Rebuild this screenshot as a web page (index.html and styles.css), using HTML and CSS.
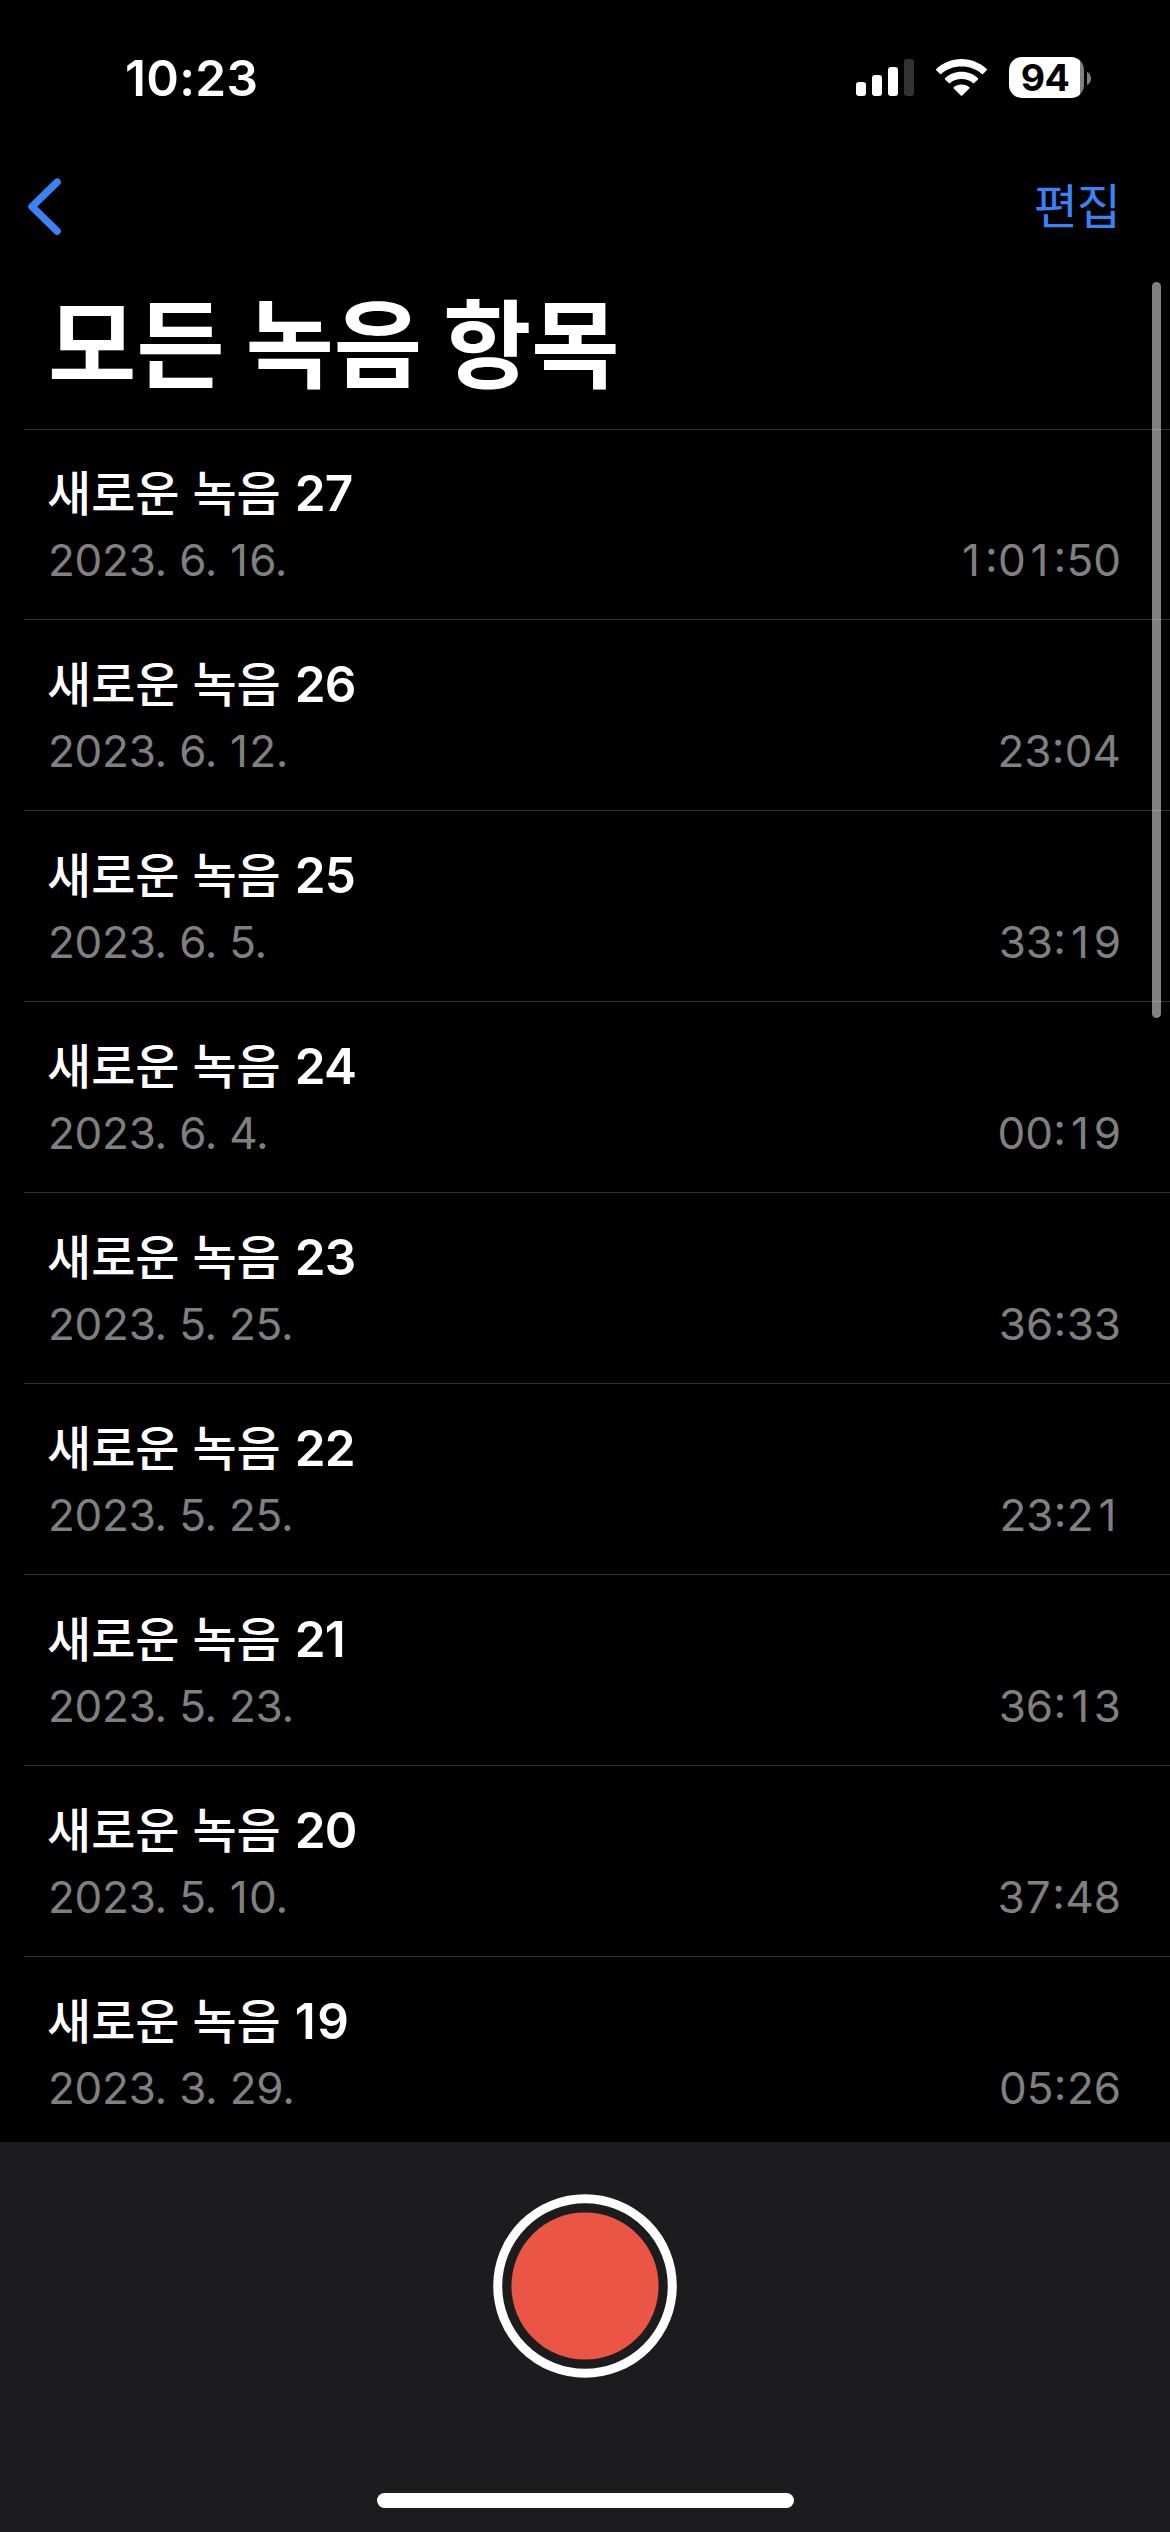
FILE: index.html
```html
<!DOCTYPE html>
<html lang="ko">
<head>
<meta charset="utf-8">
<title>모든 녹음 항목</title>
<link rel="stylesheet" href="styles.css">
</head>
<body>
<div class="screen">
  <header class="status">
    <span class="clock">10:23</span>
    <div class="indicators">
      <svg class="signal" width="58" height="37" viewBox="0 0 58 37" fill="#fff">
        <rect x="0" y="23" width="10" height="14" rx="3"/>
        <rect x="16" y="16" width="10" height="21" rx="3"/>
        <rect x="32" y="8" width="10" height="29" rx="3"/>
        <rect x="48" y="0" width="10" height="37" rx="3" fill="#333"/>
      </svg>
      <svg class="wifi" width="51" height="37" viewBox="0 0 51 37" fill="#fff">
        <path d="M25.5 0C35.300 0 44.200 3.800 50.700 10.100Q51.200 10.700 50.700 11.300L47 15Q46.400 15.500 45.800 15C40.500 10 33.400 7.400 25.500 7.400S10.500 10 5.200 15Q4.600 15.500 4 15L.3 11.300Q-.2 10.700 .3 10.100C6.800 3.800 15.700 0 25.500 0Z"/>
        <path d="M25.500 12.800C31.900 12.800 37.700 15.200 42 19.200Q42.500 19.800 42 20.400L38.200 24.100Q37.600 24.600 37 24.100C33.900 21.400 29.900 20 25.500 20S17.100 21.400 14 24.100Q13.400 24.600 12.800 24.100L9 20.400Q8.500 19.800 9 19.200C13.300 15.200 19.100 12.800 25.500 12.800Z"/>
        <path d="M25.500 25.500C28.500 25.500 31.200 26.500 33.300 28.200Q33.900 28.800 33.300 29.400L26.200 36.500Q25.500 37.100 24.800 36.500L17.700 29.400Q17.100 28.800 17.700 28.200C19.800 26.500 22.500 25.500 25.500 25.500Z"/>
      </svg>
      <div class="battery">
        <span class="level">94</span>
        <svg class="battery-cap" width="4" height="13" viewBox="0 0 4 13"><path d="M0 0C2.500 1 4 3.600 4 6.500S2.500 12 0 13Z" fill="#808080"/></svg>
      </div>
    </div>
  </header>

  <nav class="navbar">
    <svg class="back" width="34" height="58" viewBox="0 0 34 58" fill="none" stroke="#3b82f7" stroke-width="7.400" stroke-linecap="round" stroke-linejoin="round"><path d="M29.100 4.200L4 28.700L29.100 53.200"/></svg>
    <span class="edit">편집</span>
  </nav>

  <h1 class="heading">모든 녹음 항목</h1>

  <ul class="list">
    <li class="row first"><div class="name">새로운 녹음 <span class="num">27</span></div><div class="meta"><span class="date">2023. 6. <i>1</i>6.</span><span class="time"><b>1</b><u>:</u>0<b>1</b><u>:</u>50</span></div></li>
    <li class="row"><div class="name">새로운 녹음 <span class="num">26</span></div><div class="meta"><span class="date">2023. 6. <i>1</i>2.</span><span class="time">23<u>:</u>04</span></div></li>
    <li class="row"><div class="name">새로운 녹음 <span class="num">25</span></div><div class="meta"><span class="date">2023. 6. 5.</span><span class="time">33<u>:</u><b>1</b>9</span></div></li>
    <li class="row"><div class="name">새로운 녹음 <span class="num">24</span></div><div class="meta"><span class="date">2023. 6. 4.</span><span class="time">00<u>:</u><b>1</b>9</span></div></li>
    <li class="row"><div class="name">새로운 녹음 <span class="num">23</span></div><div class="meta"><span class="date">2023. 5. 25.</span><span class="time">36<u>:</u>33</span></div></li>
    <li class="row"><div class="name">새로운 녹음 <span class="num">22</span></div><div class="meta"><span class="date">2023. 5. 25.</span><span class="time">23<u>:</u>2<b>1</b></span></div></li>
    <li class="row"><div class="name">새로운 녹음 <span class="num">21</span></div><div class="meta"><span class="date">2023. 5. 23.</span><span class="time">36<u>:</u><b>1</b>3</span></div></li>
    <li class="row"><div class="name">새로운 녹음 <span class="num">20</span></div><div class="meta"><span class="date">2023. 5. <i>1</i>0.</span><span class="time">3<b>7</b><u>:</u>48</span></div></li>
    <li class="row"><div class="name">새로운 녹음 <span class="num"><i>1</i>9</span></div><div class="meta"><span class="date">2023. 3. 29.</span><span class="time">05<u>:</u>26</span></div></li>
  </ul>

  <footer class="recorder">
    <svg class="record" width="184" height="184" viewBox="0 0 184 184">
      <circle cx="92" cy="92" r="87.300" fill="none" stroke="#fff" stroke-width="9"/>
      <circle cx="92" cy="92" r="73.600" fill="#eb5545"/>
    </svg>
    <div class="home"></div>
  </footer>

  <div class="scrollbar"></div>
</div>
</body>
</html>
```
FILE: styles.css
```css
* {
  box-sizing: border-box;
}

body {
  margin: 0;
  background: #000;
  color: #fff;
  font-family: Inter, "Noto Sans CJK KR", sans-serif;
}

.screen {
  position: relative;
  display: flex;
  flex-direction: column;
  width: 1170px;
  height: 2532px;
  overflow: hidden;
  background: #000;
}

.status {
  display: flex;
  justify-content: space-between;
  height: 141px;
  padding: 48px 79px 0 125px;
}

.clock {
  font-size: 49.5px;
  font-weight: 600;
  line-height: 60px;
  letter-spacing: 0.3px;
}

.indicators {
  display: flex;
  align-items: flex-start;
}

.signal {
  margin: 11px 22px 0 0;
}

.wifi {
  margin: 11px 22px 0 0;
}

.battery {
  display: flex;
  align-items: center;
  gap: 3px;
  margin-top: 9px;
}

.level {
  width: 75px;
  height: 41px;
  padding-right: 3px;
  border-radius: 13px;
  background: linear-gradient(to right, #fff 71px, #808080 71px);
  color: #000;
  font-size: 37.5px;
  font-weight: 700;
  line-height: 41px;
  letter-spacing: -0.5px;
  text-align: center;
}

.battery-cap {
  margin-top: 1px;
}

.navbar {
  display: flex;
  justify-content: space-between;
  align-items: center;
  height: 132px;
  padding: 0 50px 0 28px;
}

.edit {
  margin-top: -8px;
  color: #3b82f7;
  font-family: "Noto Sans CJK KR", sans-serif;
  font-size: 48px;
  line-height: 60px;
  letter-spacing: -1px;
}

.heading {
  height: 156px;
  margin: 0;
  padding: 6px 0 0 48px;
  font-family: "Noto Sans CJK KR", sans-serif;
  font-size: 96px;
  font-weight: 700;
  line-height: 120px;
  word-spacing: -6px;
  white-space: nowrap;
}

.list {
  flex: 1;
  min-height: 0;
  margin: 0;
  padding: 0 0 0 24px;
  overflow: hidden;
  list-style: none;
}

.row {
  height: 191px;
  padding: 29px 49px 0 23px;
  border-top: 1px solid #333335;
}

.first {
  height: 190px;
  padding-top: 28px;
}

.name {
  height: 69px;
  font-family: "Noto Sans CJK KR", sans-serif;
  font-size: 48px;
  font-weight: 500;
  line-height: 64px;
  word-spacing: -0.5px;
  white-space: nowrap;
}

.num {
  margin-left: 1px;
  font-family: Inter, sans-serif;
  font-size: 49.5px;
  font-weight: 600;
  line-height: 1;
  letter-spacing: -0.8px;
}

.num i {
  font-style: normal;
  letter-spacing: 1.5px;
}

.meta {
  display: flex;
  justify-content: space-between;
  color: #808080;
  font-size: 44px;
  line-height: 66px;
}

.date {
  margin-left: 1px;
  letter-spacing: -0.25px;
}

.date i {
  margin-left: 0.8px;
  font-style: normal;
  letter-spacing: 1.3px;
}

.time {
  font-feature-settings: "calt" 0;
}

/* narrow digits sit in a full-width digit cell */
.time b {
  display: inline-block;
  width: 27.3px;
  font-weight: 400;
  text-align: center;
}

/* colon raised to the middle of the digits */
.time u {
  display: inline-block;
  width: 13.4px;
  line-height: 1;
  text-align: center;
  text-decoration: none;
  vertical-align: 4px;
}

.recorder {
  display: flex;
  flex-direction: column;
  justify-content: space-between;
  align-items: center;
  height: 390px;
  padding: 52px 0 24px;
  background: #1c1c1e;
}

.home {
  width: 417px;
  height: 15px;
  border-radius: 8px;
  background: #fff;
}

.scrollbar {
  position: absolute;
  top: 282px;
  left: 1152px;
  width: 9px;
  height: 736px;
  border-radius: 5px;
  background: rgba(255, 255, 255, 0.5);
}
```
